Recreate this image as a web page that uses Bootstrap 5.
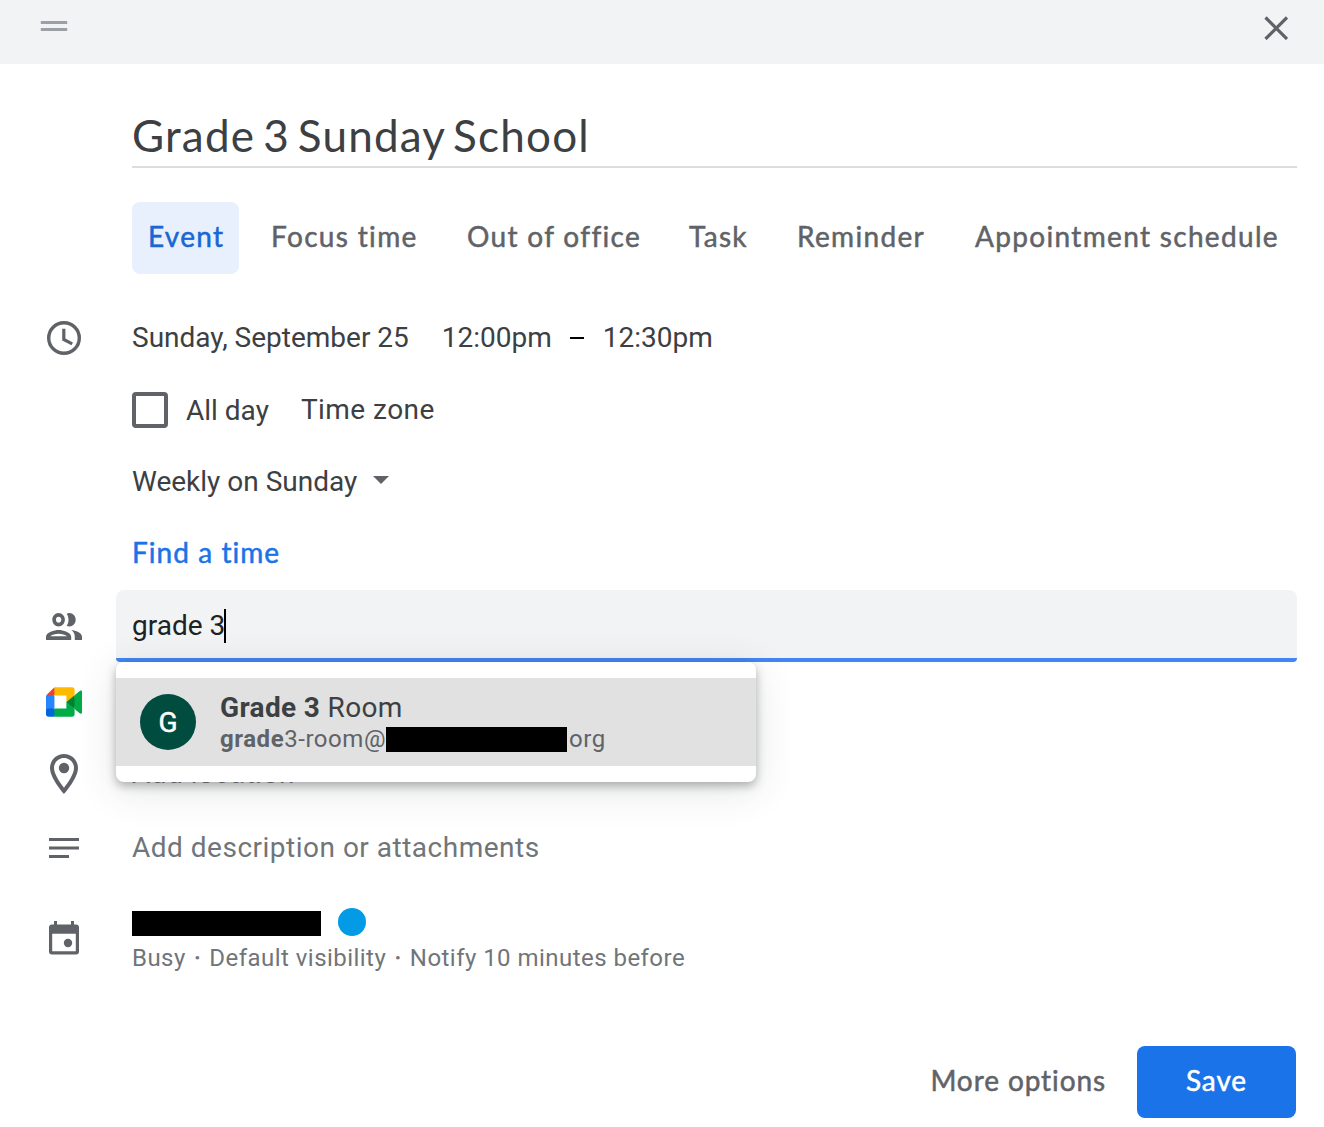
<!DOCTYPE html>
<html lang="en">
<head>
<meta charset="utf-8">
<meta name="viewport" content="width=device-width, initial-scale=1">
<title>Grade 3 Sunday School</title>
<link href="https://cdn.jsdelivr.net/npm/bootstrap@5.3.0/dist/css/bootstrap.min.css" rel="stylesheet">
<style>
  body { font-family: Roboto, "Liberation Sans", sans-serif; font-size: 28px; line-height: 36px; color: #3c4043; background: #fff; overflow: hidden; white-space: nowrap; }
  svg { display: block; flex: none; fill: #5f6368; }
  .dialog-bar { height: 64px; background: #f1f3f4; padding: 0 36px 8px 40px; }
  .gsans { font-family: Lato, Roboto, sans-serif; }
  .gsans-medium { -webkit-text-stroke: .5px currentColor; }
  .event-title { margin: 45px 27px 0 132px; height: 59px; border-bottom: 2px solid #dadce0; font-size: 44px; line-height: 52px; letter-spacing: 1.2px; word-spacing: -4.5px; }
  .event-tabs { margin: 34px 27px 28px 132px; gap: 16px; }
  .event-tabs .nav-link { height: 72px; padding: 0 0 3px 16px; line-height: 69px; color: #5f6368; border-radius: 8px; letter-spacing: 1.33px; }
  .event-tabs .nav-link.active { background: #e8f0fe; color: #1967d2; }
  .w-event { width: 107px; } .w-focus { width: 180px; } .w-office { width: 206px; }
  .w-task { width: 92px; } .w-reminder { width: 162px; } .w-appt { width: 338px; }
  .form-line { height: 72px; padding-right: 27px; }
  .icon-slot { width: 132px; padding-right: 4px; flex: none; }
  .line-body { min-width: 0; }
  .time-from { margin-left: 33px; } .time-dash { width: 14px; height: 2px; background: #000; margin: 0 19px 0 18px; }
  .day-box { width: 36px; height: 36px; margin: 0 18px 0 0; border: 4px solid #5f6368 !important; border-radius: 4px !important; }
  .day-label { padding-top: 2px; }
  .zone { margin-left: 32px; letter-spacing: .45px; }
  .repeat-arrow { margin: 0 0 4px 16px; }
  .find-time { color: #1a73e8; letter-spacing: 1.05px; }
  .guest-box { margin-left: -16px; width: 1181px; height: 72px; background: #f1f3f4; border-bottom: 4px solid #4285f4; border-radius: 8px 8px 4px 4px; padding: 4px 16px 0; color: #202124; }
  .caret-bar { width: 2px; height: 34px; background: #000; margin-left: -1px; }
  .suggest { top: 100%; left: -16px; width: 640px; height: 120px; padding: 16px 0; background: #fff; border-radius: 8px; box-shadow: 0 4px 10px rgba(60,64,67,.38), 0 8px 40px rgba(60,64,67,.14); z-index: 5; }
  .suggest-item { height: 88px; background: #e1e1e1; padding-left: 24px; }
  .avatar { width: 56px; height: 56px; background: #004d40; color: #fff; margin-right: 24px; padding-top: 1px; -webkit-text-stroke: .5px #fff; }
  .suggest-name { line-height: 32px; padding-top: 1px; letter-spacing: .35px; }
  .suggest-mail { font-size: 24px; line-height: 30px; color: #5f6368; letter-spacing: .55px; }
  .redacted { background: #000; height: 25px; }
  .suggest-mail .redacted { margin-top: 2px; margin-right: 2px; }
  .hint { color: #70757a; letter-spacing: .5px; }
  .calendar-line { margin-top: 18px; padding-top: 4px; }
  .calendar-text { padding-top: 6px; }
  .calendar-text .redacted { margin-top: 2px; }
  .status { margin-top: 6px; font-size: 24px; line-height: 32px; color: #70757a; letter-spacing: .46px; }
  .sep { margin: 0 2px; -webkit-text-stroke: .8px currentColor; }
  .cal-dot { width: 28px; height: 28px; background: #039be5; margin-left: 17px; }
  .actions { margin-top: 74px; padding-right: 28px; }
  .actions .btn { font-size: 28px; height: 72px; border: 0; border-radius: 8px; padding: 0 0 4px; letter-spacing: .9px; }
  .btn-more { color: #5f6368; margin-right: 31px; }
  .btn-save { width: 159px; background: #1a73e8; color: #fff; }
</style>
</head>
<body>
<header class="dialog-bar d-flex justify-content-between align-items-center">
  <svg class="mb-1" width="28" height="10" viewBox="0 0 28 10" style="fill:#9aa0a6"><path d="M.8 0h26.4v3H.8zM.8 7h26.4v3H.8z"/></svg>
  <svg width="24" height="24" viewBox="0 0 24 24"><path d="M1.500 1.500l21.500 21.500M23 1.500l-21.500 21.500" stroke="#5f6368" stroke-width="3.200"/></svg>
</header>
<main>
  <h1 class="event-title gsans fw-normal">Grade 3 Sunday School</h1>
  <nav class="event-tabs nav flex-nowrap gsans gsans-medium">
    <a class="nav-link active w-event">Event</a>
    <a class="nav-link w-focus">Focus time</a>
    <a class="nav-link w-office">Out of office</a>
    <a class="nav-link w-task">Task</a>
    <a class="nav-link w-reminder">Reminder</a>
    <a class="nav-link w-appt">Appointment schedule</a>
  </nav>

  <div class="form-line d-flex align-items-center">
    <div class="icon-slot d-flex justify-content-center"><svg width="40" height="40" viewBox="0 0 40 40"><g fill="none" stroke="#5f6368" stroke-width="3.400"><circle cx="20" cy="20" r="15.300"/><path d="M19.800 10.700v10.800l8.400 4.400" stroke-width="3.200"/></g></svg></div>
    <div class="line-body d-flex align-items-center"><span>Sunday, September 25</span><span class="time-from">12:00pm</span><span class="time-dash"></span><span>12:30pm</span></div>
  </div>
  <div class="form-line d-flex align-items-center">
    <div class="icon-slot"></div>
    <input class="form-check-input day-box" type="checkbox" id="allday"><label class="day-label" for="allday">All day</label><span class="zone">Time zone</span>
  </div>
  <div class="form-line d-flex align-items-center">
    <div class="icon-slot"></div>
    <span>Weekly on Sunday</span><svg class="repeat-arrow" width="16" height="8" viewBox="0 0 16 8"><path d="M0 0h16L8 8z"/></svg>
  </div>
  <div class="form-line d-flex align-items-center pb-1">
    <div class="icon-slot"></div>
    <span class="find-time gsans gsans-medium">Find a time</span>
  </div>

  <div class="form-line d-flex align-items-center">
    <div class="icon-slot d-flex justify-content-center"><svg width="36" height="27" viewBox="2 5 20 14" preserveAspectRatio="none"><path d="M9 13.750c-2.340 0-7 1.170-7 3.500V19h14v-1.750c0-2.330-4.660-3.500-7-3.500zM4.340 17c.84-.58 2.870-1.250 4.660-1.250s3.820.67 4.660 1.250H4.340zM9 12c1.930 0 3.500-1.570 3.500-3.500S10.930 5 9 5 5.500 6.570 5.500 8.500 7.070 12 9 12zm0-5c.83 0 1.500.67 1.500 1.500S9.830 10 9 10s-1.500-.67-1.500-1.500S8.170 7 9 7zm7.040 6.810c1.160.84 1.960 1.960 1.960 3.440V19h4v-1.750c0-2.020-3.500-3.170-5.960-3.440zM15 12c1.930 0 3.500-1.570 3.500-3.500S16.930 5 15 5c-.54 0-1.040.13-1.500.35.63.89 1 1.980 1 3.150s-.37 2.260-1 3.150c.46.22.96.35 1.500.35z"/></svg></div>
    <div class="position-relative">
      <div class="guest-box d-flex align-items-center"><span>grade 3</span><span class="caret-bar"></span></div>
      <div class="suggest position-absolute">
        <div class="suggest-item d-flex align-items-center">
          <div class="avatar rounded-circle d-flex align-items-center justify-content-center">G</div>
          <div>
            <div class="suggest-name"><b>Grade 3</b> Room</div>
            <div class="suggest-mail d-flex align-items-center"><b>grade</b><span>3-room@</span><span class="redacted" style="width:181px"></span><span>org</span></div>
          </div>
        </div>
      </div>
    </div>
  </div>

  <div class="form-line d-flex align-items-center mt-1">
    <div class="icon-slot d-flex justify-content-center"><svg width="36" height="30" viewBox="0 0 87.5 72"><path fill="#00832d" d="M49.500 36l8.530 9.750 11.470 7.330 2-17.020-2-16.640-11.690 6.440z"/><path fill="#0066da" d="M0 51.500V66c0 3.315 2.685 6 6 6h14.500l3-10.960-3-9.540-9.950-3z"/><path fill="#e94235" d="M20.500 0L0 20.500l10.550 3 9.950-3 2.950-9.410z"/><path fill="#2684fc" d="M20.500 20.500H0v31h20.500z"/><path fill="#00ac47" d="M82.600 8.680L69.500 19.420v33.660l13.160 10.790c1.970 1.540 4.850.135 4.850-2.370V11c0-2.535-2.945-3.925-4.910-2.320zM49.500 36v15.500h-29V72h43c3.315 0 6-2.685 6-6V53.080z"/><path fill="#ffba00" d="M63.500 0h-43v20.500h29V36l20-16.570V6c0-3.315-2.685-6-6-6z"/></svg></div>
  </div>
  <div class="form-line d-flex align-items-center">
    <div class="icon-slot d-flex justify-content-center"><svg width="28" height="40" viewBox="5 2 14 20"><path d="M12 2C8.130 2 5 5.130 5 9c0 5.250 7 13 7 13s7-7.750 7-13c0-3.870-3.130-7-7-7zM7 9c0-2.760 2.240-5 5-5s5 2.240 5 5c0 2.880-2.880 7.190-5 9.880C9.920 16.210 7 11.850 7 9z"/><circle cx="12" cy="9" r="2.600"/></svg></div>
    <span class="hint">Add location</span>
  </div>
  <div class="form-line d-flex align-items-center pt-1">
    <div class="icon-slot d-flex justify-content-center"><svg width="30" height="20" viewBox="0 0 30 20"><path d="M0 0h30v3H0zM0 8.500h30v3H0zM0 17h20v3H0z"/></svg></div>
    <span class="hint">Add description or attachments</span>
  </div>
  <div class="form-line calendar-line d-flex align-items-center">
    <div class="icon-slot d-flex justify-content-center"><svg width="30" height="34" viewBox="0 0 30 34"><path fill-rule="evenodd" d="M5 0h3v3.500h14V0h3v3.500h2a3 3 0 0 1 3 3v24a3 3 0 0 1-3 3H3a3 3 0 0 1-3-3v-24a3 3 0 0 1 3-3h2zM3.200 12.800v17.400h23.600V12.800z"/><circle cx="19" cy="22" r="4.200"/></svg></div>
    <div class="calendar-text">
      <div class="d-flex align-items-center"><span class="redacted" style="width:189px"></span><span class="cal-dot rounded-circle"></span></div>
      <div class="status">Busy <span class="sep">·</span> Default visibility <span class="sep">·</span> Notify 10 minutes before</div>
    </div>
  </div>
  <div class="actions d-flex justify-content-end gsans gsans-medium">
    <button class="btn btn-more">More options</button>
    <button class="btn btn-save">Save</button>
  </div>
</main>
<script src="https://cdn.jsdelivr.net/npm/bootstrap@5.3.0/dist/js/bootstrap.bundle.min.js"></script>
</body>
</html>
